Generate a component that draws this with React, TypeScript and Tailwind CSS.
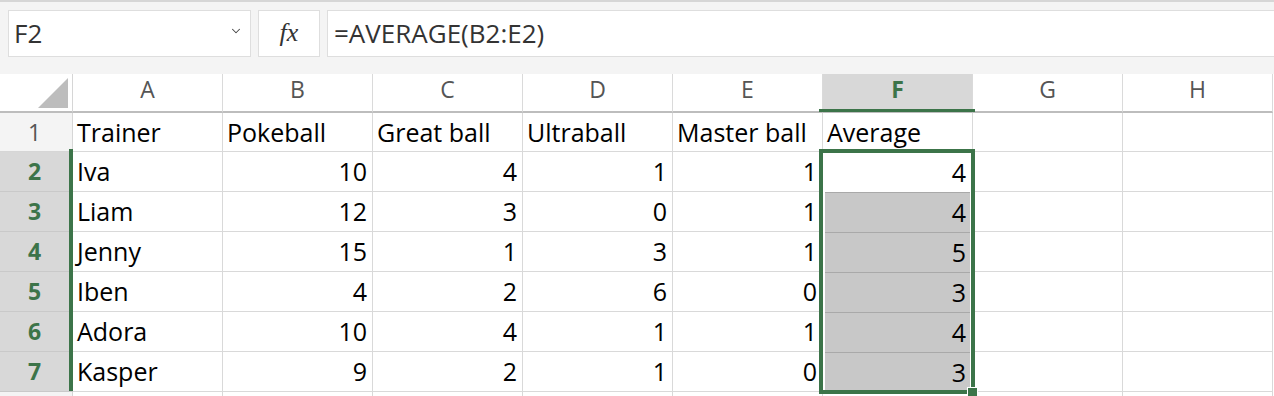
import { ChevronDown } from "lucide-react";

const cols = ["A", "B", "C", "D", "E", "F", "G", "H"];

const data: (string | number)[][] = [
  ["Trainer", "Pokeball", "Great ball", "Ultraball", "Master ball", "Average"],
  ["Iva", 10, 4, 1, 1, 4],
  ["Liam", 12, 3, 0, 1, 4],
  ["Jenny", 15, 1, 3, 1, 5],
  ["Iben", 4, 2, 6, 0, 3],
  ["Adora", 10, 4, 1, 1, 4],
  ["Kasper", 9, 2, 1, 0, 3],
  [],
];

const green = "#3c7449";

function Toolbar() {
  return (
    <div className="h-[74px] bg-[#f4f4f4] border-t-2 border-[#d6d6d6] flex items-start pt-[8px] pl-[8px] gap-[7px]">
      <div className="w-[243px] h-[47px] bg-white border border-[#dedede] flex items-center justify-between pl-[5px] pr-[7px]">
        <span className="text-[26px] text-[#333]">F2</span>
        <ChevronDown size={14} strokeWidth={1.8} color="#444" className="-mt-[6px]" />
      </div>
      <div className="w-[62px] h-[47px] bg-white border border-[#dedede] flex items-center justify-center">
        <span className="text-[26px] italic text-[#333] font-['Liberation_Serif',serif] -mt-[2px]">fx</span>
      </div>
      <div className="flex-1 h-[47px] bg-white border border-[#dedede] border-r-0 flex items-center pl-[6px]">
        <span className="text-[26px] text-[#333]">=AVERAGE(B2:E2)</span>
      </div>
    </div>
  );
}

function HeaderRow() {
  return (
    <>
      <div className="h-[39px] border-r border-b-2 border-r-[#d6d6d6] border-b-[#bdbdbd] flex items-end justify-end pr-[4px] pb-[3px]">
        <svg width="30" height="30" viewBox="0 0 30 30">
          <polygon points="30,0 30,30 0,30" fill="#bdbdbd" />
        </svg>
      </div>
      {cols.map((c) => (
        <div
          key={c}
          className={
            "h-[39px] border-r border-b-2 border-r-[#dadada] border-b-[#bdbdbd] flex items-center justify-center pb-[6px] text-[23px] " +
            (c === "F" ? "bg-[#d8d8d8] font-bold text-[#3c7449]" : "text-[#555]")
          }
        >
          {c}
        </div>
      ))}
    </>
  );
}

function Cell({ r, c }: { r: number; c: number }) {
  const v = data[r][c];
  const isNum = typeof v === "number";
  const h = r === 0 ? "h-[39px]" : "h-[40px]";
  if (c === 5 && r >= 1 && r <= 6) {
    if (r === 1) {
      return (
        <div className={h + " border-r border-[#d9d9d9] bg-white flex items-center justify-end pr-[6px] pt-[1px]"}>
          {v}
        </div>
      );
    }
    return (
      <div className={h + " border-r border-[#d9d9d9] bg-white px-[2px]"}>
        <div className="h-full bg-[#c8c8c8] border-t border-[#a9a9a9] flex items-center justify-end pr-[4px]">
          {v}
        </div>
      </div>
    );
  }
  return (
    <div
      className={
        h +
        " border-r border-b border-[#d9d9d9] flex items-center pt-[1px] " +
        (isNum ? "justify-end pr-[5px]" : "pl-[4px]")
      }
    >
      {v}
    </div>
  );
}

function Sheet() {
  return (
    <div className="relative grid grid-cols-[73px_repeat(8,150px)] bg-white text-[25px] text-black">
      <HeaderRow />
      {data.map((row, r) => (
        <div key={r} className="contents">
          <div
            className={
              (r === 0 ? "h-[39px]" : "h-[40px]") +
              " border-r border-b flex items-center justify-center pr-[3px] text-[23px] " +
              (r >= 1 && r <= 6
                ? "bg-[#d8d8d8] border-[#c9c9c9] font-bold text-[#3c7449]"
                : "bg-[#f4f4f4] border-[#d6d6d6] text-[#555]")
            }
          >
            {r < 7 ? r + 1 : ""}
          </div>
          {cols.map((_, c) => (
            <Cell key={c} r={r} c={c} />
          ))}
        </div>
      ))}
      {/* selection overlays */}
      <div className="absolute left-[819px] top-[75px] w-[156px] h-[245px] border-4" style={{ borderColor: green }} />
      <div className="absolute left-[819px] top-[35px] w-[156px] h-[3px]" style={{ background: green }} />
      <div className="absolute left-[69px] top-[75px] w-[4px] h-[242px]" style={{ background: green }} />
      <div className="absolute left-[967px] top-[313px] w-[11px] h-[11px] border border-white" style={{ background: green }} />
    </div>
  );
}

export default function App() {
  return (
    <div className="w-[1274px] h-[396px] overflow-hidden bg-white font-['Open_Sans',sans-serif]">
      <Toolbar />
      <Sheet />
    </div>
  );
}
